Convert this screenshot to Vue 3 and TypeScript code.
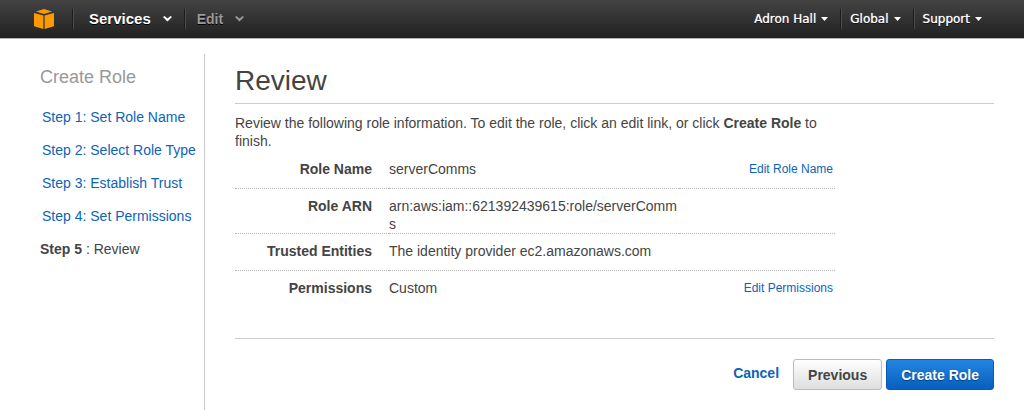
<script setup lang="ts">
interface Step {
  label: string
  name: string
}

interface Detail {
  label: string
  value: string
  edit?: string
}

const steps: Step[] = [
  { label: 'Step 1', name: 'Set Role Name' },
  { label: 'Step 2', name: 'Select Role Type' },
  { label: 'Step 3', name: 'Establish Trust' },
  { label: 'Step 4', name: 'Set Permissions' },
]

const details: Detail[] = [
  { label: 'Role Name', value: 'serverComms', edit: 'Edit Role Name' },
  { label: 'Role ARN', value: 'arn:aws:iam::621392439615:role/serverComms' },
  { label: 'Trusted Entities', value: 'The identity provider ec2.amazonaws.com' },
  { label: 'Permissions', value: 'Custom', edit: 'Edit Permissions' },
]

const accountMenus: string[] = ['Adron Hall', 'Global', 'Support']
</script>

<template>
  <div class="page">
    <header class="topbar">
      <a class="logo" href="#" aria-label="Console home">
        <svg width="20" height="20" viewBox="0 0 20 20" fill="#ff9900" aria-hidden="true">
          <path d="M10 0 18 2.4 10 5 2 2.4Z" />
          <path d="M0 4 9.4 6.6V20L0 17.2Z" />
          <path d="M20 4 10.6 6.6V20L20 17.2Z" />
        </svg>
      </a>
      <nav class="menus">
        <button class="menu services" type="button">
          Services
          <svg width="9" height="6" viewBox="0 0 9 6" fill="currentColor" aria-hidden="true">
            <path d="M0 1 1.5 0 4.5 2.6 7.5 0 9 1 4.5 5.4Z" />
          </svg>
        </button>
        <button class="menu edit" type="button">
          Edit
          <svg width="9" height="6" viewBox="0 0 9 6" fill="currentColor" aria-hidden="true">
            <path d="M0 1 1.5 0 4.5 2.6 7.5 0 9 1 4.5 5.4Z" />
          </svg>
        </button>
      </nav>
      <nav class="account">
        <button v-for="menu in accountMenus" :key="menu" class="account-menu" type="button">
          {{ menu }}
          <svg width="7" height="4" viewBox="0 0 7 4" fill="currentColor" aria-hidden="true">
            <path d="M0 0H7L3.5 4Z" />
          </svg>
        </button>
      </nav>
    </header>

    <div class="body">
      <aside class="sidebar">
        <h2>Create Role</h2>
        <ol class="steps">
          <li v-for="step in steps" :key="step.label">
            <a href="#">{{ step.label }}: {{ step.name }}</a>
          </li>
          <li class="current" aria-current="step"><strong>Step 5</strong> : Review</li>
        </ol>
      </aside>

      <main class="content">
        <h1>Review</h1>
        <p class="intro">
          Review the following role information. To edit the role, click an edit link, or click
          <strong>Create Role</strong> to finish.
        </p>
        <table class="details">
          <tbody>
            <tr v-for="row in details" :key="row.label">
              <th scope="row">{{ row.label }}</th>
              <td class="value">{{ row.value }}</td>
              <td class="action"><a v-if="row.edit" href="#">{{ row.edit }}</a></td>
            </tr>
          </tbody>
        </table>
        <footer class="actions">
          <a class="cancel" href="#">Cancel</a>
          <button class="btn" type="button">Previous</button>
          <button class="btn primary" type="button">Create Role</button>
        </footer>
      </main>
    </div>
  </div>
</template>

<style>
body {
  margin: 0;
  background: #fff;
}
</style>

<style scoped>
.page {
  display: flex;
  flex-direction: column;
  min-height: 100vh;
  color: #444;
  font: 14px/18px "Liberation Sans", Arial, sans-serif;
}

a {
  color: #0d63b8;
  text-decoration: none;
}

button {
  font: inherit;
  cursor: pointer;
}

.topbar {
  display: flex;
  align-items: center;
  height: 38px;
  padding: 0 32px 0 34px;
  border-bottom: 1px solid #b4b4b4;
  background: linear-gradient(#434343, #212121);
}

.logo {
  display: flex;
  margin-right: 18px;
}

.menus,
.account {
  display: flex;
}

.account {
  margin-left: auto;
}

.menu,
.account-menu {
  display: flex;
  align-items: center;
  height: 20px;
  padding: 0;
  border: 0;
  background: none;
  text-shadow: 0 1px 0 #000;
  white-space: nowrap;
}

.menu {
  gap: 12px;
  padding: 0 12px 0 16px;
  border-left: 1px solid #1c1c1c;
  box-shadow: inset 1px 0 0 #4c4c4c;
  font-weight: bold;
}

.services {
  color: #fff;
  font-size: 15px;
}

.edit {
  padding-left: 12px;
  color: #999;
}

.account-menu {
  gap: 5px;
  padding: 0 12px 0 9px;
  color: #fff;
  font: 12px/18px "DejaVu Sans", Verdana, sans-serif;
  text-shadow: 0 0 1px #ccc, 0 1px 0 #000;
}

.account-menu + .account-menu {
  border-left: 1px solid #1c1c1c;
  box-shadow: inset 1px 0 0 #4c4c4c;
}

.account-menu:last-child {
  padding-right: 10px;
}

.body {
  display: flex;
  flex: 1;
  padding-top: 15px;
}

.sidebar {
  box-sizing: border-box;
  flex: 0 0 205px;
  padding: 12px 0 0 40px;
  border-right: 1px solid #ccc;
}

.sidebar h2 {
  margin: 0 0 20px;
  color: #999;
  font-size: 18px;
  font-weight: normal;
  line-height: 22px;
}

.steps {
  display: flex;
  flex-direction: column;
  gap: 15px;
  margin: 0;
  padding: 0;
  list-style: none;
  white-space: nowrap;
}

.steps a {
  padding-left: 2px;
}

.content {
  flex: 1;
  min-width: 0;
  padding: 10px 30px 20px;
}

.content h1 {
  margin: 0 0 10px;
  padding-bottom: 5px;
  border-bottom: 1px solid #ccc;
  font-size: 28px;
  font-weight: normal;
  line-height: 34px;
}

.intro {
  max-width: 600px;
  margin: 0 0 2px;
}

.details {
  width: 100%;
  max-width: 600px;
  border-collapse: separate;
  border-spacing: 0;
  table-layout: fixed;
}

.details th,
.details td {
  box-sizing: border-box;
  height: 37px;
  padding: 8px 0 0;
  border-bottom: 1px dotted #bbb;
  vertical-align: top;
}

.details tr:last-child > * {
  border-bottom: 0;
}

.details th {
  width: 154px;
  padding-right: 17px;
  text-align: right;
}

.details .value {
  width: 290px;
  text-align: left;
  overflow-wrap: anywhere;
}

.details .action {
  padding-right: 2px;
  font-size: 12px;
  text-align: right;
}

.actions {
  display: flex;
  justify-content: flex-end;
  align-items: center;
  margin-top: 30px;
  padding-top: 20px;
  border-top: 1px solid #ccc;
}

.cancel {
  margin-right: 14px;
  padding-bottom: 3px;
  font-weight: bold;
}

.btn {
  height: 31px;
  padding: 0 14px;
  border: 1px solid #bbb;
  border-radius: 3px;
  background: linear-gradient(#fff, #dedede);
  color: #444;
  font-weight: bold;
}

.btn.primary {
  margin-left: 4px;
  border-color: #0a5cb3;
  background: linear-gradient(#2484e2, #0660bd);
  color: #fff;
  text-shadow: 0 1px 1px #043d7a;
}
</style>
